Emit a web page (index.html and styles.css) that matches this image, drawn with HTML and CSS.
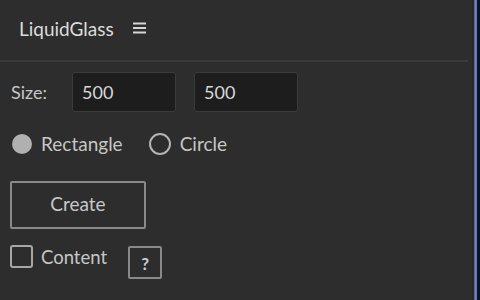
FILE: index.html
```html
<!DOCTYPE html>
<html>
<head>
<meta charset="utf-8">
<link rel="stylesheet" href="styles.css">
</head>
<body>
<div class="app">
  <div class="panel">
    <header class="header">
      <span class="title">LiquidGlass</span>
      <svg class="menu" width="14" height="12" viewBox="0 0 14 12"><rect x="0" y="0.5" width="13" height="2" fill="#d6d6d6"/><rect x="0" y="5" width="13" height="2" fill="#d6d6d6"/><rect x="0" y="9.5" width="13" height="2" fill="#d6d6d6"/></svg>
    </header>
    <div class="body">
      <div class="row size-row">
        <span class="label">Size:</span>
        <div class="input">500</div>
        <div class="input">500</div>
      </div>
      <div class="row radio-row">
        <label class="radio"><span class="dot filled"></span><span>Rectangle</span></label>
        <label class="radio"><span class="dot ring"></span><span>Circle</span></label>
      </div>
      <button class="create">Create</button>
      <div class="row check-row">
        <label class="check"><span class="box"></span><span>Content</span></label>
        <button class="help">?</button>
      </div>
    </div>
  </div>
  <div class="edge"></div>
</div>
</body>
</html>
```
FILE: styles.css
```css
html, body {
  margin: 0;
  padding: 0;
  background: #2d2d2d;
  width: 480px;
  height: 300px;
  overflow: hidden;
}
.app {
  display: flex;
  width: 480px;
  height: 300px;
  font-family: "Lato", "Open Sans", sans-serif;
  color: #c6c6c6;
}
.panel {
  flex: 1;
  display: flex;
  flex-direction: column;
}
.header {
  height: 62px;
  display: flex;
  align-items: center;
  padding-left: 19px;
  gap: 19px;
  border-bottom: 2px solid #3a3a3a;
  box-sizing: border-box;
  margin-right: 4px;
}
.title {
  font-size: 19px;
  color: #dcdcdc;
  margin-top: -4px;
}
.menu { margin-top: -4px; }
.body {
  display: flex;
  flex-direction: column;
  padding: 10px 0 0 10px;
}
.row {
  display: flex;
  align-items: center;
}
.label {
  font-size: 18px;
  width: 61px;
  padding-left: 1px;
}
.input {
  width: 104px;
  height: 40px;
  box-sizing: border-box;
  background: #1d1d1d;
  border: 1px solid #3b3b3b;
  border-radius: 3px;
  font-size: 18px;
  color: #d8d8d8;
  padding-left: 9px;
  display: flex;
  align-items: center;
  margin-right: 18px;
}
.radio-row {
  margin-top: 20px;
}
.radio {
  display: flex;
  align-items: center;
  font-size: 19px;
  gap: 9px;
}
.radio + .radio { margin-left: 26px; }
.dot {
  width: 20px;
  height: 20px;
  border-radius: 50%;
  box-sizing: border-box;
  margin-left: 2px;
}
.dot.filled { background: #b0b0b0; }
.dot.ring { border: 2.5px solid #b4b4b4; width: 22px; height: 22px; margin-left: 0; }
.create {
  margin-top: 26px;
  width: 136px;
  height: 48px;
  background: transparent;
  border: 2px solid #8a8a8a;
  border-radius: 2px;
  color: #c8c8c8;
  font-family: inherit;
  font-size: 19px;
  padding: 0 0 4px 0;
}
.check-row { margin-top: 16px; align-items: flex-start; }
.check {
  display: flex;
  align-items: center;
  font-size: 18.5px;
  gap: 8px;
}
.box {
  width: 23px;
  height: 23px;
  box-sizing: border-box;
  border: 2.5px solid #a8a8a8;
  border-radius: 3px;
}
.help {
  margin-left: 21px;
  margin-top: 1px;
  width: 34px;
  height: 33px;
  background: transparent;
  border: 2px solid #8a8a8a;
  border-radius: 2px;
  color: #d0d0d0;
  font-family: inherit;
  font-size: 17px;
  font-weight: bold;
  padding: 2px 0 0 0;
}
.edge {
  width: 8px;
  height: 300px;
  background: linear-gradient(to right, #262626 0, #262626 1px, #2c2c2c 1px, #2c2c2c 2px, #4a5a88 2px, #7a8cc0 4px, #5668a0 5px, #0d1430 5px, #0a1028 8px);
}
```
